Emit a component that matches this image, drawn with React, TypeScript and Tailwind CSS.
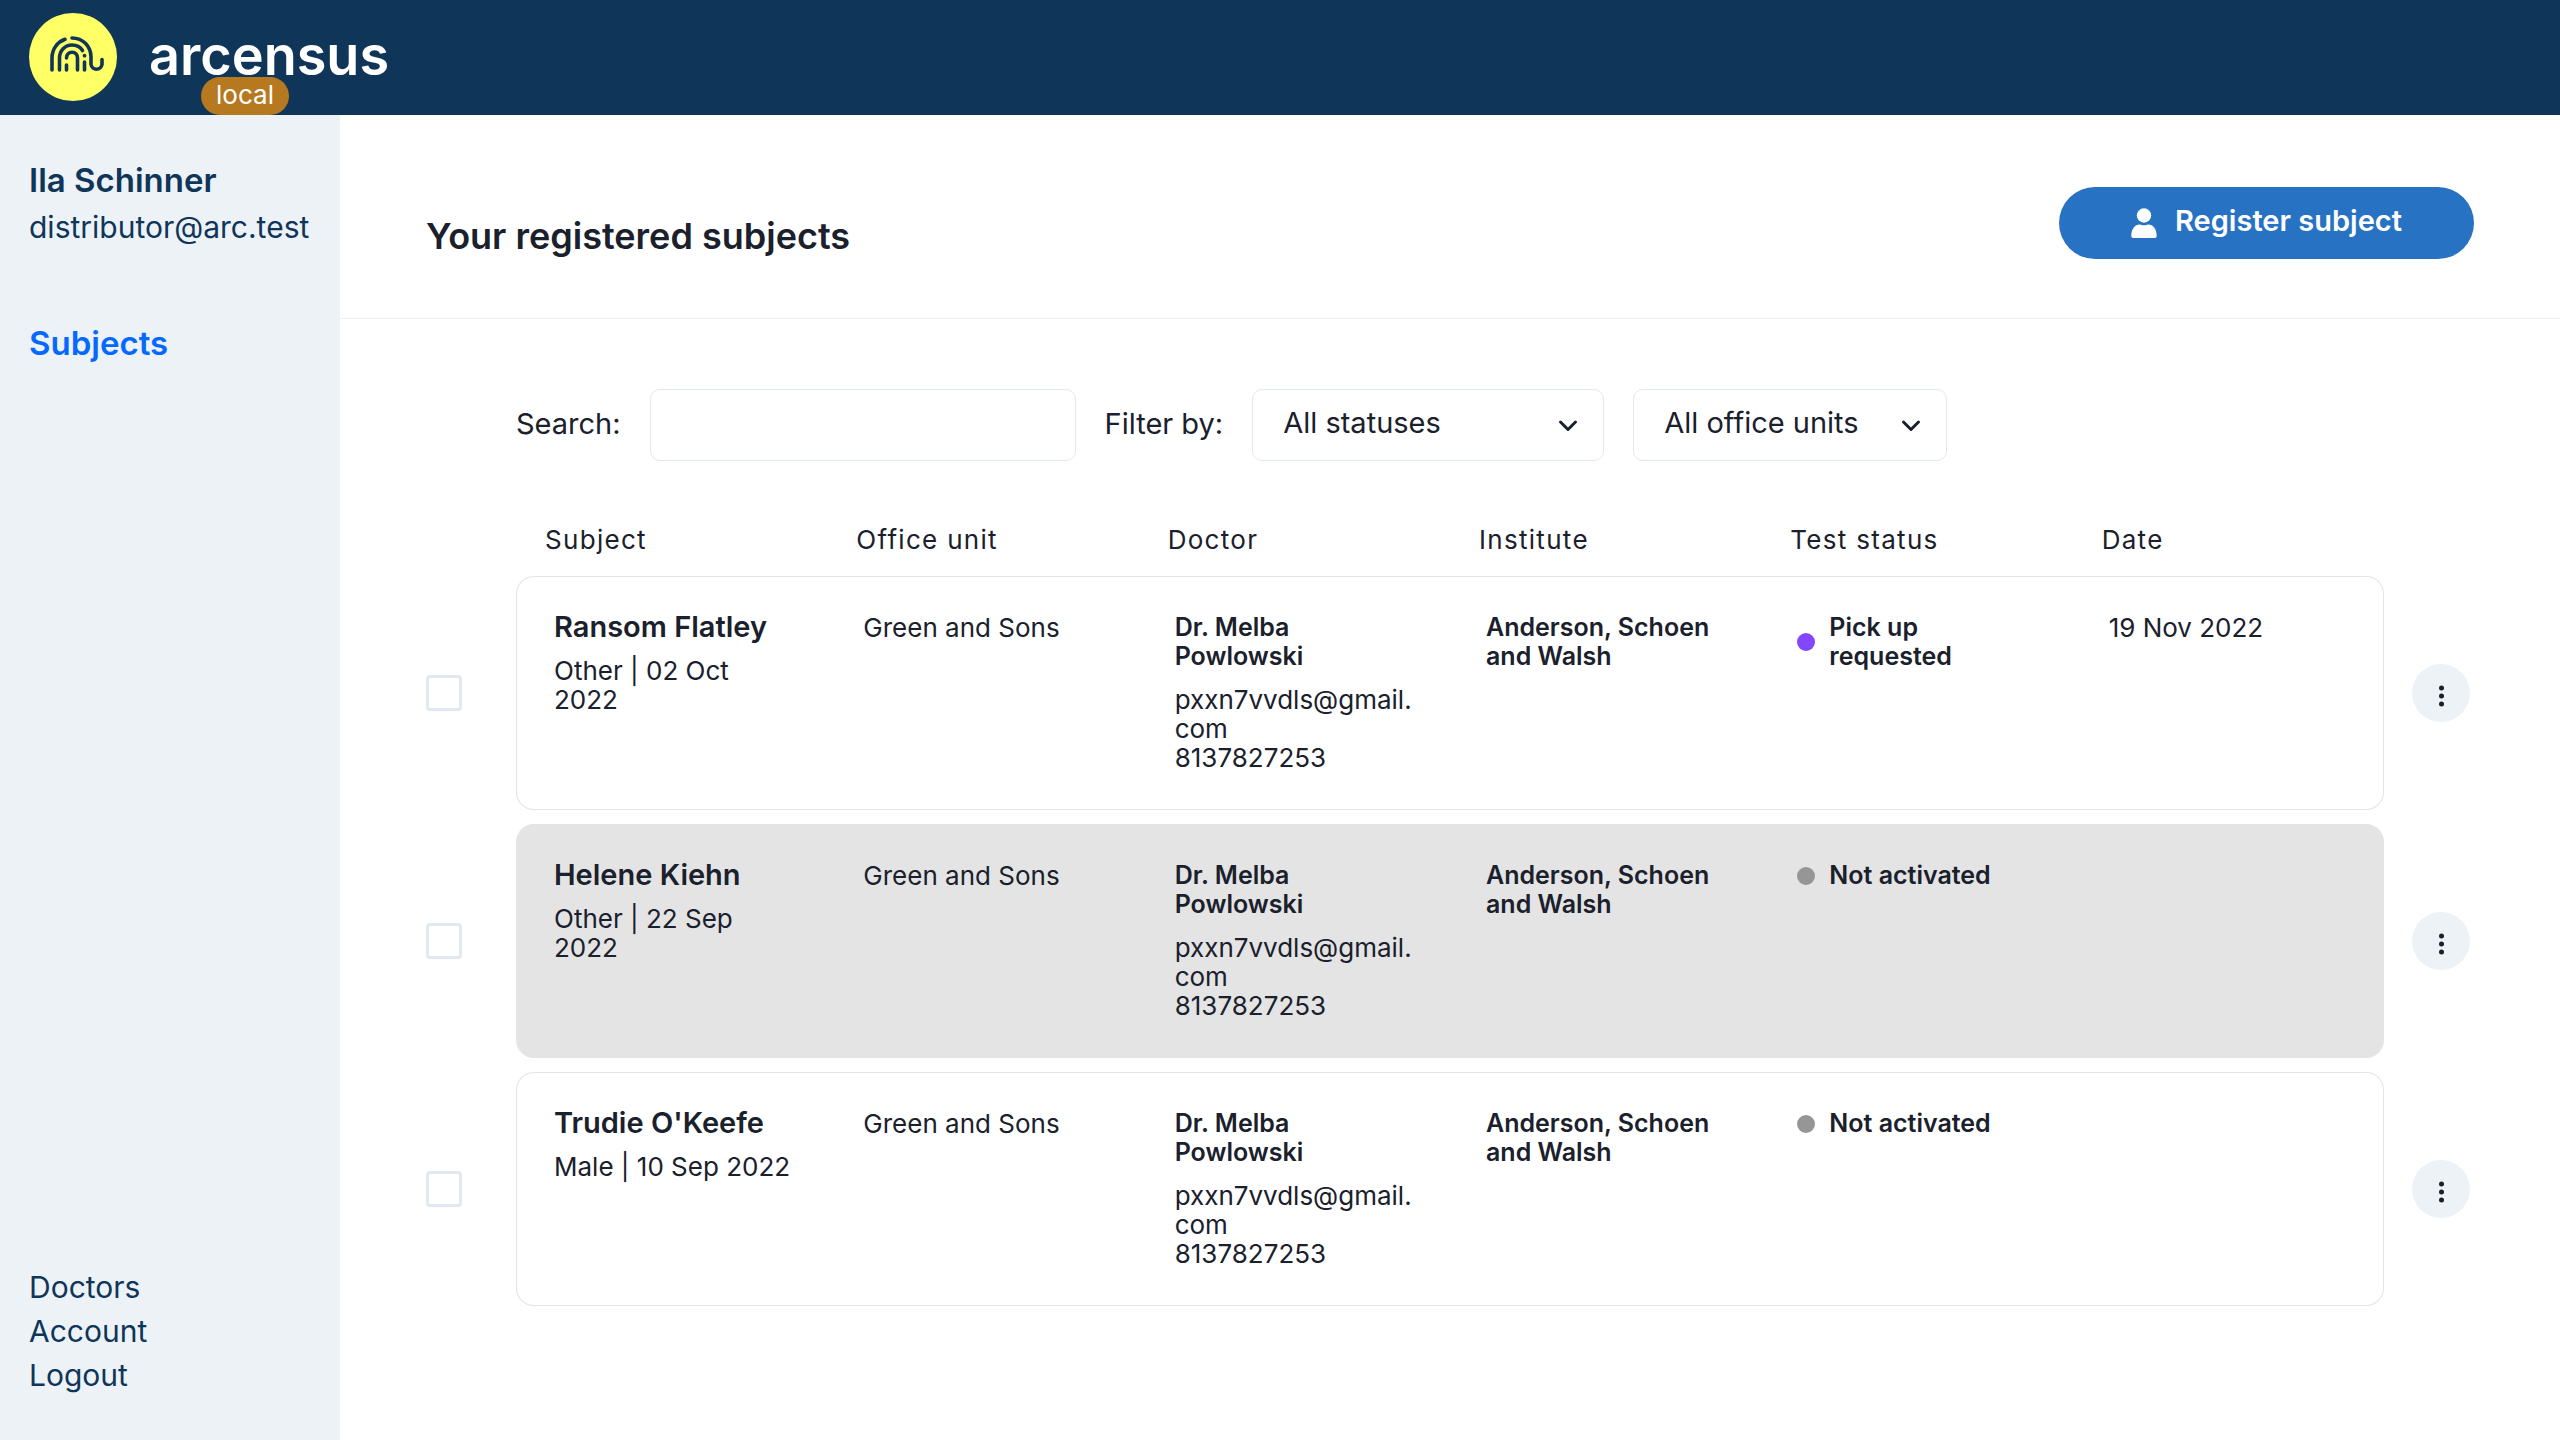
import React from 'react';

type Subject = {
  name: string;
  info: string;
  status: string;
  dot: string;
  date: string;
  muted: boolean;
};

const subjects: Subject[] = [
  { name: 'Ransom Flatley', info: 'Other | 02 Oct 2022', status: 'Pick up requested', dot: 'bg-[#8247ff]', date: '19 Nov 2022', muted: false },
  { name: 'Helene Kiehn', info: 'Other | 22 Sep 2022', status: 'Not activated', dot: 'bg-[#969696]', date: '', muted: true },
  { name: "Trudie O'Keefe", info: 'Male | 10 Sep 2022', status: 'Not activated', dot: 'bg-[#969696]', date: '', muted: false },
];

const columns = ['Subject', 'Office unit', 'Doctor', 'Institute', 'Test status', 'Date'];

function LogoMark() {
  return (
    <svg viewBox="0 0 88 88" className="size-[88px] shrink-0" aria-hidden="true">
      <circle cx="44" cy="44" r="44" fill="#ffff66" />
      <g fill="none" stroke="#0f3559" strokeWidth="3.6" strokeLinecap="round">
        <path d="M23 57V45C23 36 28.500 29 36 26.300" />
        <path d="M43 25C54 25 62 33.500 62 44V51.500A5.600 5.800 0 0 0 73 51.500V46.500" />
        <path d="M30.500 57V45C30.500 37.500 36 32 43 32C47.500 32 51.500 34.300 53.500 37.500" />
        <path d="M37.500 45C37.500 41.500 40 39.300 43 39.300C46.500 39.300 48.500 42 48.500 45V57" />
        <path d="M37.500 52V57" />
        <path d="M55.500 49V57" />
      </g>
      <circle cx="55.500" cy="42.700" r="1.900" fill="#0f3559" />
    </svg>
  );
}

function Chevron() {
  return (
    <svg viewBox="0 0 24 24" className="pointer-events-none absolute right-6 top-1/2 size-6 -translate-y-1/2" fill="none" stroke="#1a202c" strokeWidth="3" strokeLinecap="round" strokeLinejoin="round" aria-hidden="true">
      <path d="M4.500 9l7.500 7.500L19.500 9" />
    </svg>
  );
}

function Filter({ label, width }: { label: string; width: string }) {
  return (
    <div className={`relative ${width}`}>
      <select aria-label={label} className="h-[72px] w-full appearance-none rounded-[10px] border border-slate-200 bg-white pr-12 pb-1 pl-[30px] text-[29px]">
        <option>{label}</option>
      </select>
      <Chevron />
    </div>
  );
}

function Row({ subject }: { subject: Subject }) {
  const cell = `border-y border-[#e4e4e4] pr-8 pt-9 pb-[37px] align-top ${subject.muted ? 'bg-[#e4e4e4]' : 'bg-white'}`;
  return (
    <tr>
      <td className="align-middle">
        <input type="checkbox" aria-label={`Select ${subject.name}`} className="block size-9 appearance-none rounded-[4px] border-[3px] border-slate-200 bg-white" />
      </td>
      <td className={`${cell} rounded-l-[18px] border-l pl-[37px]`}>
        <div className="whitespace-nowrap text-[29px] leading-[27px] font-semibold">{subject.name}</div>
        <div className="mt-4">{subject.info}</div>
      </td>
      <td className={`${cell} pl-9`}>Green and Sons</td>
      <td className={`${cell} pl-9`}>
        <div className="text-[25px] leading-[29px] font-semibold">Dr. Melba Powlowski</div>
        <div className="mt-[14px]">pxxn7vvdls@gmail.<wbr />com</div>
        <div>8137827253</div>
      </td>
      <td className={`${cell} pl-9 text-[25px] leading-[29px] font-semibold`}>Anderson, Schoen and Walsh</td>
      <td className={`${cell} pl-9 text-[25px] leading-[29px] font-semibold`}>
        <div className="flex items-center gap-[14px]">
          <span className={`size-[18px] shrink-0 rounded-full ${subject.dot}`} />
          <span>{subject.status}</span>
        </div>
      </td>
      <td className={`${cell} rounded-r-[18px] border-r pl-9`}>{subject.date}</td>
      <td className="pl-7 align-middle">
        <button aria-label={`Actions for ${subject.name}`} className="flex size-[58px] items-center justify-center rounded-full bg-[#edf2f7]">
          <svg viewBox="0 0 24 24" className="mt-1.5 size-6" fill="#1a202c" aria-hidden="true">
            <circle cx="12.500" cy="4" r="2.500" />
            <circle cx="12.500" cy="12" r="2.500" />
            <circle cx="12.500" cy="20" r="2.500" />
          </svg>
        </button>
      </td>
    </tr>
  );
}

export default function App() {
  return (
    <div className="flex min-h-screen flex-col bg-white font-['Inter',sans-serif] text-[#1a202c]">
      <header className="flex items-start gap-8 bg-[#0f3559] px-[29px] pt-[13px]">
        <LogoMark />
        <div>
          <div className="pt-[22px] text-[54px] leading-[42px] font-semibold text-white">arcensus</div>
          <span className="ml-[52px] flex h-[38px] w-[88px] items-center justify-center rounded-full bg-[#b7791f] pb-0.5 text-[26px] leading-[36px] text-white">local</span>
        </div>
      </header>

      <div className="flex flex-1">
        <aside className="flex w-[340px] shrink-0 flex-col bg-[#edf2f7] px-[29px] pt-10 pb-[43px] text-[#0f3559]">
          <div className="text-[33px] leading-[50px] font-semibold">Ila Schinner</div>
          <div className="text-[30px] leading-[44px]">distributor@arc.test</div>
          <nav className="mt-[70px] text-[33px] leading-[48px] font-semibold text-[#0569ff]">
            <a href="#subjects">Subjects</a>
          </nav>
          <nav className="mt-auto flex flex-col text-[30px] leading-[44px]">
            <a href="#doctors">Doctors</a>
            <a href="#account">Account</a>
            <a href="#logout">Logout</a>
          </nav>
        </aside>

        <main className="min-w-0 flex-1">
          <div className="flex items-start justify-between border-b border-[#edf2f7] px-[86px] pt-[72px] pb-[57px]">
            <h1 className="pt-6 text-[36px] leading-[50px] font-semibold">Your registered subjects</h1>
            <button className="flex h-[72px] w-[415px] items-center justify-center gap-[18px] rounded-full bg-[#2872c4] text-[29px] font-semibold text-white">
              <svg viewBox="0 0 26 30" className="h-[30px] w-[26px]" fill="currentColor" aria-hidden="true">
                <circle cx="13" cy="7.500" r="7.200" />
                <path d="M2.500 30C1 30 .3 29.300 .3 28C.3 21 4 16.500 8.500 16.500C10 16.500 10.500 17.300 13 17.300S16 16.500 17.500 16.500C22 16.500 25.700 21 25.700 28C25.700 29.300 25 30 23.500 30Z" />
              </svg>
              <span className="pb-1">Register subject</span>
            </button>
          </div>

          <div className="px-[86px] pt-[70px]">
            <div className="flex items-center gap-[29px] pl-[90px] text-[29px]">
              <label htmlFor="search" className="pb-0.5">Search:</label>
              <input id="search" type="text" className="h-[72px] w-[426px] rounded-[10px] border border-slate-200 px-6" />
              <span className="pb-0.5">Filter by:</span>
              <Filter label="All statuses" width="w-[352px]" />
              <Filter label="All office units" width="w-[314px]" />
            </div>

            <table className="mt-[45px] w-full table-fixed border-separate border-spacing-x-0 border-spacing-y-[14px] text-[26px] leading-[29px]">
              <thead>
                <tr>
                  <td className="w-[90px]" />
                  {columns.map((c) => (
                    <th key={c} scope="col" className="px-[29px] pt-[5px] pb-2 text-left font-normal tracking-wider">{c}</th>
                  ))}
                  <td className="w-[90px]" />
                </tr>
              </thead>
              <tbody>
                {subjects.map((s) => (
                  <Row key={s.name} subject={s} />
                ))}
              </tbody>
            </table>
          </div>
        </main>
      </div>
    </div>
  );
}
